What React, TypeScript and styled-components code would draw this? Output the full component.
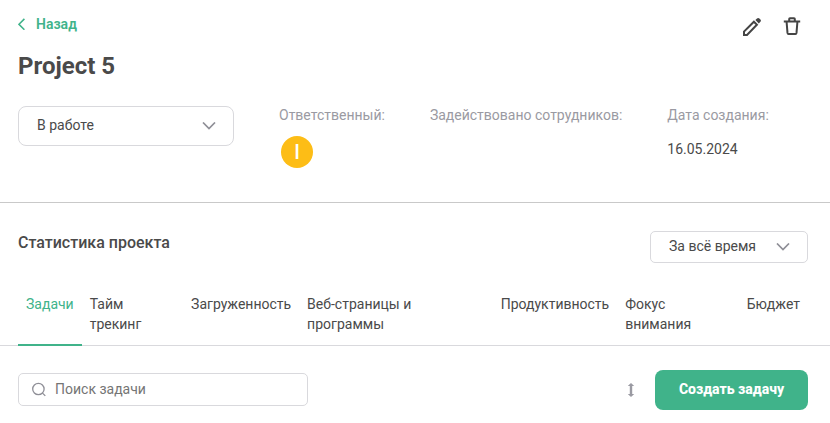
import React from "react";
import styled, { createGlobalStyle } from "styled-components";

const GlobalStyle = createGlobalStyle`
  *, *::before, *::after { box-sizing: border-box; }
  body { margin: 0; background: #fff; }
  body, button, input, select {
    font-family: Roboto, "Liberation Sans", sans-serif;
    font-size: 14px;
    line-height: 20px;
    color: #4a4a4a;
  }
  h1, h2, p, dl, dd { margin: 0; }
`;

const green = "#40b38a";
const line = "#d9d9dd";
const muted = "#9a9aa2";

const Header = styled.header`
  padding: 14px 18px 34px;
  border-bottom: 1px solid #c9c9c9;
`;

const TopBar = styled.div`
  display: flex;
  justify-content: space-between;
  align-items: flex-start;
  height: 34px;
`;

const BackLink = styled.a`
  display: flex;
  align-items: center;
  gap: 11px;
  color: ${green};
  font-weight: 600;
  text-decoration: none;
`;

const Actions = styled.div`
  display: flex;
  gap: 16px;
  padding-right: 8px;
`;

const IconButton = styled.button`
  display: flex;
  align-items: center;
  justify-content: center;
  width: 24px;
  height: 24px;
  padding: 0;
  border: 0;
  background: none;
  cursor: pointer;
`;

const Title = styled.h1`
  font-size: 24px;
  line-height: 36px;
  font-weight: 700;
  margin-bottom: 22px;
`;

const Summary = styled.div`
  display: flex;
  align-items: flex-start;
  gap: 45px;
  min-height: 62px;
`;

const SelectWrap = styled.div<{ $width: number }>`
  display: grid;
  align-items: center;
  flex: none;
  width: ${(p) => p.$width}px;

  > * { grid-area: 1 / 1; }
  > svg { justify-self: end; margin-right: 18px; pointer-events: none; }
`;

const Select = styled.select<{ $height: number; $radius: number }>`
  appearance: none;
  width: 100%;
  height: ${(p) => p.$height}px;
  padding: 0 36px 2px 18px;
  border: 1px solid ${line};
  border-radius: ${(p) => p.$radius}px;
  background: #fff;
  cursor: pointer;
`;

const Field = styled.dl`
  flex: none;
`;

const Label = styled.dt`
  color: ${muted};
  line-height: 18px;
  margin-bottom: 12px;
`;

const Value = styled.dd`
  padding: 4px 0;
  line-height: 18px;
`;

const Avatar = styled.span`
  display: flex;
  align-items: center;
  justify-content: center;
  width: 32px;
  height: 32px;
  margin: -4px 2px;
  border-radius: 50%;
  background: #fdbd16;
  color: #fff;
  font-size: 20px;
  font-weight: 500;
`;

const StatsHead = styled.div`
  display: flex;
  justify-content: space-between;
  align-items: flex-start;
  padding: 28px 22px 24px 18px;
`;

const Subtitle = styled.h2`
  font-size: 16px;
  line-height: 24px;
  font-weight: 500;
`;

const Tabs = styled.nav`
  display: flex;
  justify-content: space-between;
  padding: 0 22px 0 18px;
  border-bottom: 1px solid ${line};
`;

const Tab = styled.a<{ $active?: boolean }>`
  padding: 7px 8px 10px;
  margin-bottom: -1px;
  border-bottom: 2px solid ${(p) => (p.$active ? green : "transparent")};
  color: ${(p) => (p.$active ? green : "inherit")};
  text-decoration: none;
`;

const Toolbar = styled.div`
  display: flex;
  align-items: center;
  padding: 24px 22px 12px 18px;
`;

const Search = styled.label`
  display: flex;
  align-items: center;
  gap: 8px;
  width: 290px;
  height: 33px;
  padding: 0 12px 1px 13px;
  margin: 0 auto 1px 0;
  border: 1px solid ${line};
  border-radius: 5px;
`;

const SearchInput = styled.input`
  flex: 1;
  min-width: 0;
  padding: 0;
  border: 0;
  outline: 0;
  background: none;
  &::placeholder { color: #757575; opacity: 1; }
`;

const CreateButton = styled.button`
  width: 153px;
  height: 40px;
  margin-left: 12px;
  padding: 0 0 2px;
  border: 0;
  border-radius: 8px;
  background: ${green};
  color: #fff;
  font-weight: 800;
  cursor: pointer;
`;

const Chevron = () => (
  <svg width="14" height="8" viewBox="0 0 14 8" fill="none" stroke="#8f8f97" strokeWidth="1.7" aria-hidden="true">
    <path d="M1 .5l6 6 6-6" />
  </svg>
);

const tabs = [
  "Задачи",
  "Тайм трекинг",
  "Загруженность",
  "Веб-страницы и программы",
  "Продуктивность",
  "Фокус внимания",
  "Бюджет",
];

export default function App() {
  return (
    <>
      <GlobalStyle />
      <Header>
        <TopBar>
          <BackLink href="#back">
            <svg width="7" height="12" viewBox="0 0 7 12" fill="none" stroke={green} strokeWidth="1.6" aria-hidden="true">
              <path d="M6.4 .9L1 6.3l5.4 5.4" />
            </svg>
            Назад
          </BackLink>
          <Actions>
            <IconButton aria-label="Редактировать">
              <svg width="20" height="20" viewBox="0 0 20 20" fill="none" stroke="#444" strokeWidth="2" aria-hidden="true">
                <path d="M2 19v-3.4L11.9 5.7l3 3L5 19z" />
                <path d="M13.4 4l1.6-1.6c.7-.7 1.7-.7 2.4 0l1 1c.7.7.7 1.7 0 2.4l-1.6 1.6z" fill="#444" stroke="none" />
              </svg>
            </IconButton>
            <IconButton aria-label="Удалить">
              <svg width="18" height="20" viewBox="0 0 18 20" fill="none" stroke="#444" strokeWidth="2" aria-hidden="true">
                <path d="M.8 5.6h16.4M6.2 5.5V3c0-.5.3-.8.8-.8h4c.5 0 .8.3.8.8v2.5M3.6 6l.9 10.9c.1.6.5 1 1 1h7c.5 0 .9-.4 1-1L14.4 6" />
              </svg>
            </IconButton>
          </Actions>
        </TopBar>
        <Title>Project 5</Title>
        <Summary>
          <SelectWrap $width={216}>
            <Select $height={40} $radius={8} aria-label="Статус проекта">
              <option>В работе</option>
            </Select>
            <Chevron />
          </SelectWrap>
          <Field>
            <Label>Ответственный:</Label>
            <Value><Avatar>I</Avatar></Value>
          </Field>
          <Field>
            <Label>Задействовано сотрудников:</Label>
          </Field>
          <Field>
            <Label>Дата создания:</Label>
            <Value>16.05.2024</Value>
          </Field>
        </Summary>
      </Header>
      <main>
        <StatsHead>
          <Subtitle>Статистика проекта</Subtitle>
          <SelectWrap $width={158}>
            <Select $height={32} $radius={5} aria-label="Период">
              <option>За всё время</option>
            </Select>
            <Chevron />
          </SelectWrap>
        </StatsHead>
        <Tabs>
          {tabs.map((name, i) => (
            <Tab key={name} href={`#tab-${i}`} $active={i === 0}>{name}</Tab>
          ))}
        </Tabs>
        <Toolbar>
          <Search>
            <svg width="15" height="15" viewBox="0 0 15 15" fill="none" stroke="#8f8f97" strokeWidth="1.3" aria-hidden="true">
              <circle cx="6.4" cy="7" r="5.7" />
              <path d="M10.5 11.1l2.8 2.8" />
            </svg>
            <SearchInput type="text" placeholder="Поиск задачи" aria-label="Поиск задачи" />
          </Search>
          <IconButton aria-label="Сортировать">
            <svg width="8" height="14" viewBox="0 0 8 14" aria-hidden="true">
              <path d="M4 0l3.2 3H5.2v8h2L4 14 .8 11h2V3h-2z" fill="#9a9aa2" />
            </svg>
          </IconButton>
          <CreateButton>Создать задачу</CreateButton>
        </Toolbar>
      </main>
    </>
  );
}
